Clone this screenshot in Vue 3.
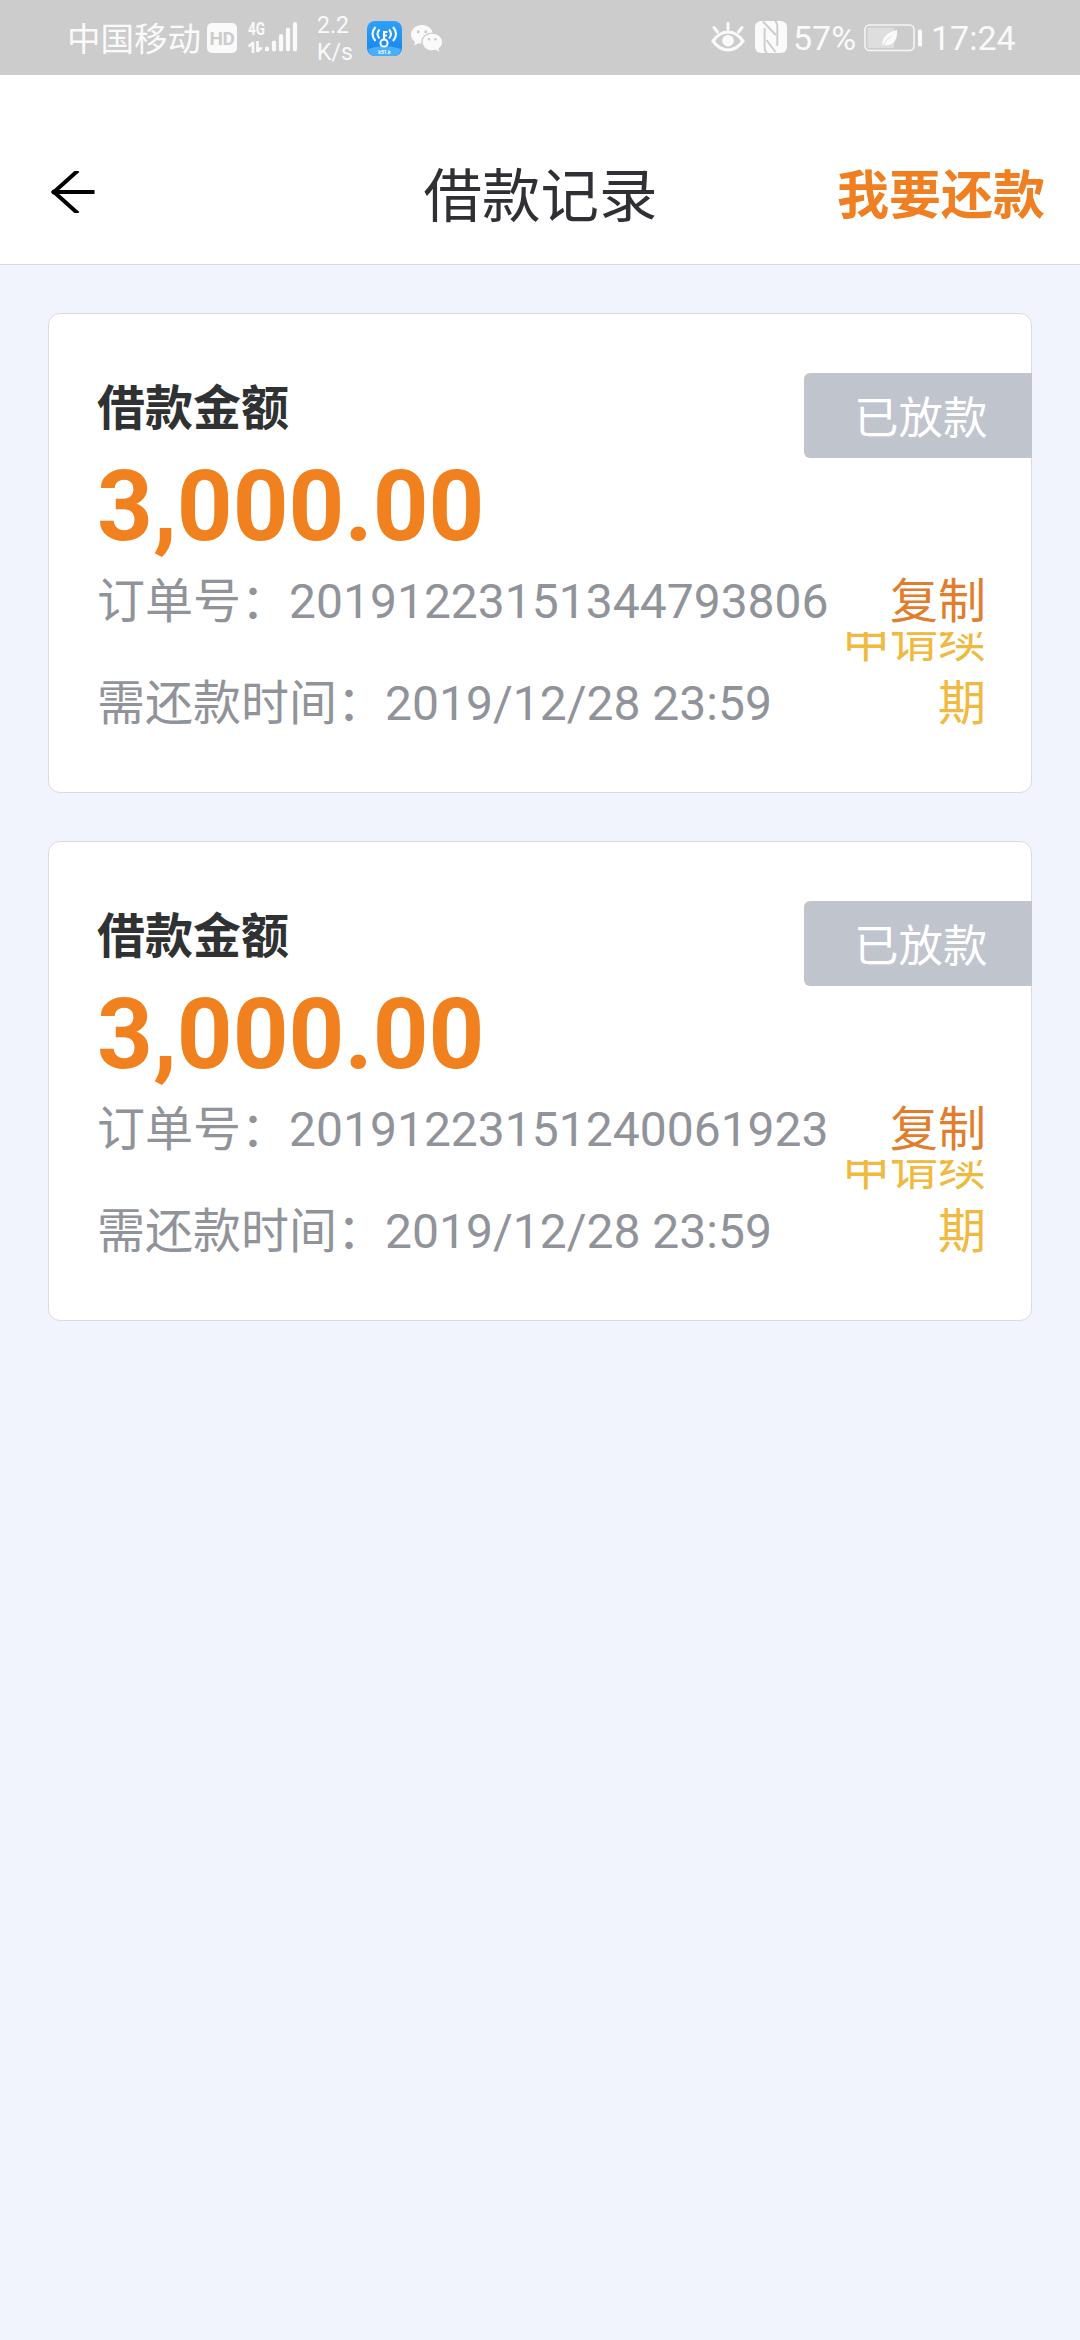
<script setup>
const loans = [
  { amount: '3,000.00', order: '20191223151344793806', due: '2019/12/28 23:59' },
  { amount: '3,000.00', order: '20191223151240061923', due: '2019/12/28 23:59' },
]
</script>

<template>
  <div class="screen">
    <div class="status">
      <span class="carrier">中国移动</span>
      <span class="hd">HD</span>
      <div class="signal">
        <div class="network">
          <span class="gen">4G</span>
          <svg width="15" height="12" viewBox="0 0 15 12" fill="none" stroke="#fafafa" stroke-width="2.6">
            <path d="M5 12V1M5.6 1.2L.8 5.6M9.5 0v11M9 10.8l4.8-4.4" />
          </svg>
        </div>
        <svg width="34" height="32" viewBox="0 0 34 32" stroke="#fafafa" stroke-width="4.2" stroke-linecap="round">
          <path d="M3 28.500v-.8M10 28.500v-7M17 28.500V15M24 28.500V8.500M31 28.500V3" />
        </svg>
      </div>
      <div class="speed"><span>2.2</span><span>K/s</span></div>
      <svg class="wifi" width="35" height="35" viewBox="0 0 35 35">
        <defs>
          <linearGradient id="blue" x2="0" y2="1"><stop stop-color="#2fa0fb" /><stop offset="1" stop-color="#1583ea" /></linearGradient>
        </defs>
        <rect width="35" height="35" rx="8" fill="url(#blue)" />
        <path d="M1 28Q17.500 22 34 28Q33 35 27 35H8Q2 35 1 28Z" fill="#48aef9" />
        <g fill="none" stroke="#fff" stroke-width="2">
          <circle cx="17" cy="22" r="3.600" />
          <path d="M17 18.500V10M17 11h3.500M17 14.500h3" />
          <path d="M12.500 8.500q-4 4.500 0 9M8.500 6q-6 7 0 14M22 8.500q4 4.500 0 9M26 6q6 7 0 14" />
        </g>
        <text x="17.500" y="32.500" text-anchor="middle" font-size="5" font-weight="700" fill="#fff">k51.k</text>
      </svg>
      <svg class="wechat" width="32" height="28" viewBox="0 0 32 28" fill="#fafafa">
        <path d="M11 0C4.800 0 0 4.200 0 9.600c0 3 1.500 5.600 4 7.300L3 20.500l4.300-2.200c1 .3 2.500.5 3.700.5 6.200 0 11-4 11-9.200S17 0 11 0z" />
        <ellipse cx="21.300" cy="17" rx="11" ry="9.500" fill="#ccc" />
        <path d="M21.300 8.700c-5.400 0-9.600 3.600-9.600 8.200s4.200 8.300 9.600 8.300c1.200 0 2.400-.2 3.400-.5l3.700 2-.9-3.200c2.200-1.600 3.500-4 3.500-6.600 0-4.600-4.300-8.200-9.700-8.200z" />
        <g fill="#ccc"><circle cx="7.200" cy="6.700" r="1.500" /><circle cx="14.800" cy="6.700" r="1.500" /><circle cx="18" cy="14.300" r="1.300" /><circle cx="24.500" cy="14.300" r="1.300" /></g>
      </svg>
      <svg class="eye" width="34" height="30" viewBox="0 0 34 30" fill="none" stroke="#fafafa" stroke-width="3" stroke-linecap="round">
        <path d="M2 19Q8.500 10 17 10T32 19Q25.500 28 17 28T2 19ZM17 7V1.500M6.500 10L3 5.500M27.500 10L31 5.500" />
        <circle cx="17" cy="18.700" r="5.800" fill="#fafafa" stroke="none" />
      </svg>
      <svg class="nfc" width="32" height="32" viewBox="0 0 32 32" fill="none">
        <rect width="32" height="32" rx="6" fill="#fafafa" />
        <path d="M8 .5L20.800 14M9.600 7V27Q9.600 29.500 12 32.500M11.500 19L20.500 31M22.300 25V5Q22.300 2.500 20 -.5" stroke="#ccc" stroke-width="1.900" />
      </svg>
      <span class="percent">57%</span>
      <svg class="battery" width="60" height="28" viewBox="0 0 60 28">
        <rect x="1" y="1" width="49" height="25.500" rx="4.500" fill="none" stroke="#f5f5f5" stroke-width="1.600" />
        <rect x="3.500" y="3.500" width="26.500" height="20.500" rx="1.500" fill="#dedede" />
        <path d="M18.500 21.500Q17 10 33 6Q34 22 20.500 21.200Z" fill="#fafafa" />
        <path d="M19 22Q22 15 28 11.500" fill="none" stroke="#dedede" stroke-width="1" />
        <rect x="54" y="5.500" width="4" height="17" rx="1.500" fill="#fafafa" />
      </svg>
      <span class="clock">17:24</span>
    </div>

    <header class="nav">
      <div class="side">
        <svg width="44" height="42" viewBox="0 0 44 42" fill="none" stroke="#000" stroke-width="4">
          <path d="M3 21H43.500M27 -.5L3 21L27 42.500" />
          <circle cx="3" cy="21" r="2.500" fill="#000" stroke="none" />
        </svg>
      </div>
      <h1>借款记录</h1>
      <div class="side repay">我要还款</div>
    </header>

    <main>
      <section v-for="loan in loans" :key="loan.order" class="card">
        <div class="badge">已放款</div>
        <h2>借款金额</h2>
        <div class="amount">{{ loan.amount }}</div>
        <div class="row">
          <span>订单号：{{ loan.order }}</span>
          <span class="copy">复制</span>
        </div>
        <div class="row due">
          <span>需还款时间：{{ loan.due }}</span>
          <span class="extend">申请续期</span>
        </div>
      </section>
    </main>
  </div>
</template>

<style>
body {
  background: #f1f4fd;
}
</style>

<style scoped>
.screen {
  min-height: 2340px;
  background: #f1f4fd;
  font-family: Roboto, "Noto Sans CJK SC", sans-serif;
}
.status {
  display: flex;
  align-items: flex-start;
  box-sizing: border-box;
  height: 75px;
  padding-left: 67px;
  background: #ccc;
  color: #fafafa;
  white-space: nowrap;
}
.status svg,
.nav svg {
  display: block;
  flex: none;
}
.carrier {
  width: 140px;
  font-size: 33.500px;
  line-height: 79px;
}
.hd {
  width: 30px;
  height: 30px;
  margin-top: 23px;
  border-radius: 5px;
  background: #fafafa;
  color: #ccc;
  font-size: 19px;
  font-weight: 700;
  line-height: 31px;
  text-align: center;
  letter-spacing: -0.5px;
}
.signal {
  display: flex;
  width: 69px;
  margin: 21px 0 0 11px;
}
.network {
  width: 16px;
}
.network svg {
  margin-top: 4px;
}
.gen {
  display: block;
  font-size: 18px;
  font-weight: 700;
  line-height: 16px;
  transform: scaleX(0.75);
  transform-origin: left;
}
.speed {
  display: flex;
  flex-direction: column;
  width: 50px;
  margin-top: 12px;
  font-size: 23px;
  line-height: 27px;
}
.wifi {
  margin-top: 21px;
}
.wechat {
  margin: 25px 0 0 9px;
}
.eye {
  margin: 22px 0 0 268px;
}
.nfc {
  margin: 21px 0 0 10px;
}
.percent {
  width: 71px;
  margin-left: 6px;
  font-size: 34px;
  line-height: 77px;
}
.battery {
  margin-top: 24px;
}
.clock {
  margin-left: 7px;
  font-size: 34px;
  line-height: 77px;
}
.nav {
  display: flex;
  align-items: center;
  height: 136px;
  padding: 53px 35px 0 51px;
  border-bottom: 1px solid #d8dade;
  background: #fff;
}
.side {
  flex: 1;
}
.side svg {
  margin-top: -8px;
}
h1 {
  margin: 2px 16px 0 0;
  color: #2f2f34;
  font-size: 58.500px;
  font-weight: 400;
  line-height: 80px;
}
.repay {
  margin: 2px 0 0 -1px;
  color: #ef7f20;
  font-size: 52px;
  font-weight: 700;
  line-height: 80px;
  text-align: right;
  white-space: nowrap;
}
main {
  display: flex;
  flex-direction: column;
  gap: 48px;
  padding: 48px;
}
.card {
  position: relative;
  box-sizing: border-box;
  height: 480px;
  padding: 61px 45px 0 48px;
  border: 1px solid #d9dbe1;
  border-radius: 12px;
  background: #fff;
}
.badge {
  position: absolute;
  top: 59px;
  right: -1px;
  box-sizing: border-box;
  width: 228px;
  height: 85px;
  padding-left: 50px;
  border-radius: 6px 0 0 6px;
  background: #c0c4cd;
  color: #fff;
  font-size: 44.500px;
  line-height: 92px;
}
h2 {
  margin: 0 0 1px;
  color: #303133;
  font-size: 48px;
  font-weight: 700;
  line-height: 68px;
}
.amount {
  color: #f1801e;
  font-size: 97.400px;
  font-weight: 700;
  line-height: 126px;
}
.row {
  display: flex;
  justify-content: space-between;
  height: 62px;
  color: #909399;
  font-size: 48px;
  line-height: 63px;
  white-space: nowrap;
}
.copy {
  color: #e17e2d;
}
.due {
  align-items: flex-end;
  height: 103px;
  overflow: hidden;
}
.extend {
  width: 144px;
  color: #f0b93f;
  text-align: right;
  white-space: normal;
}
</style>
